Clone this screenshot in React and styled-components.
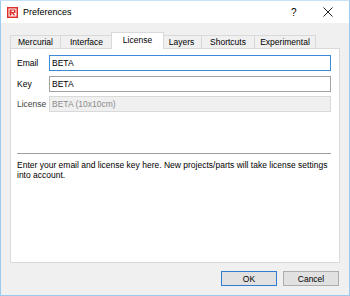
import React from "react";
import styled, { createGlobalStyle } from "styled-components";

const Global = createGlobalStyle`
  html, body { margin: 0; padding: 0; background: #fff; }
  body { font-family: "Liberation Sans", Arial, sans-serif; font-size: 8.5px; color: #000; }
`;

const Window = styled.div`
  width: 350px;
  height: 296px;
  box-sizing: border-box;
  border: 1px solid #9ccbf1;
  border-top-color: #c9e2f7;
  display: flex;
  flex-direction: column;
  background: #f0f0f0;
`;

const TitleBar = styled.div`
  height: 22px;
  background: #fff;
  display: flex;
  align-items: center;
  padding: 0 0 0 6px;
  flex-shrink: 0;
`;

const Title = styled.span`
  margin-left: 5px;
  font-size: 9px;
  flex: 1;
`;

const Help = styled.span`
  font-size: 10px;
  width: 20px;
  margin-right: 12px;
`;

const Close = styled.span`
  display: flex;
  align-items: center;
  width: 26px;
`;

const Body = styled.div`
  flex: 1;
  display: flex;
  flex-direction: column;
  padding: 10px 9px 10px 9px;
`;

const TabRow = styled.div`
  display: flex;
  align-items: flex-end;
  height: 16px;
  position: relative;
  z-index: 1;
`;

const Tab = styled.div`
  box-sizing: border-box;
  width: ${(p) => p.$w}px;
  height: ${(p) => (p.$active ? 17 : 14)}px;
  margin: 0 ${(p) => (p.$active ? -2 : 0)}px;
  border: 1px solid #d9d9d9;
  border-left-width: ${(p) => (p.$first || p.$active ? 1 : 0)}px;
  border-bottom: ${(p) => (p.$active ? "none" : "1px solid #d9d9d9")};
  background: ${(p) => (p.$active ? "#fff" : "#f0f0f0")};
  display: flex;
  align-items: center;
  justify-content: center;
  padding-bottom: ${(p) => (p.$active ? 2 : 0)}px;
  position: relative;
  z-index: ${(p) => (p.$active ? 2 : 1)};
  font-size: 8.5px;
`;

const Pane = styled.div`
  box-sizing: border-box;
  margin-top: -1px;
  height: 215px;
  width: 330px;
  background: #fff;
  border: 1px solid #d9d9d9;
  padding: 6px 8px 0 6px;
  display: flex;
  flex-direction: column;
`;

const Form = styled.div`
  display: grid;
  grid-template-columns: 32px 1fr;
  row-gap: 4.5px;
  align-items: center;
`;

const Label = styled.span`
  font-size: 8.5px;
  color: ${(p) => (p.$disabled ? "#444" : "#000")};
  white-space: nowrap;
`;

const Field = styled.div`
  box-sizing: border-box;
  height: 16px;
  border: 1px solid ${(p) => (p.$focus ? "#3c8ad8" : p.$disabled ? "#d9d9d9" : "#a3a3a3")};
  background: ${(p) => (p.$disabled ? "#f0f0f0" : "#fff")};
  color: ${(p) => (p.$disabled ? "#8b8b8b" : "#000")};
  padding-left: 2px;
  display: flex;
  align-items: center;
  font-size: 8.5px;
`;

const Separator = styled.div`
  margin: 41px 0 0 0;
  height: 1px;
  background: #a0a0a0;
  width: 314px;
`;

const Info = styled.p`
  margin: 6px 0 0 0;
  font-size: 8.5px;
  line-height: 10px;
  width: 316px;
`;

const Buttons = styled.div`
  display: flex;
  justify-content: flex-end;
  gap: 6px;
  margin-top: 8px;
  padding-right: 1px;
`;

const Button = styled.div`
  box-sizing: border-box;
  width: 56px;
  height: 15px;
  background: #e1e1e1;
  border: 1px solid ${(p) => (p.$default ? "#2f7cd1" : "#adadad")};
  display: flex;
  align-items: center;
  justify-content: center;
  font-size: 8.5px;
`;

const AppIcon = () => (
  <svg width="11" height="11" viewBox="0 0 11 11">
    <rect x="0" y="0" width="11" height="11" fill="#e0302a" />
    <rect x="1.5" y="1.5" width="8" height="8" fill="#fff" />
    <path d="M2.5 2.5 H8.5 V6 H6.5 L8.5 8.5 H6.5 L4.8 6 H4.5 V8.5 H2.5 Z" fill="#e0302a" />
    <rect x="4.5" y="3.5" width="2.5" height="1.5" fill="#fff" />
  </svg>
);

const tabs = [
  { name: "Mercurial", w: 51 },
  { name: "Interface", w: 52 },
  { name: "License", w: 53, active: true },
  { name: "Layers", w: 40 },
  { name: "Shortcuts", w: 53 },
  { name: "Experimental", w: 61 },
];

export default function App() {
  return (
    <>
      <Global />
      <Window>
        <TitleBar>
          <AppIcon />
          <Title>Preferences</Title>
          <Help>?</Help>
          <Close>
            <svg width="10" height="10" viewBox="0 0 10 10">
              <path d="M0.5 0.5 L9.5 9.5 M9.5 0.5 L0.5 9.5" stroke="#222" strokeWidth="1" />
            </svg>
          </Close>
        </TitleBar>
        <Body>
          <TabRow>
            {tabs.map((t, i) => (
              <Tab key={t.name} $w={t.w} $active={t.active} $first={i === 0}>
                {t.name}
              </Tab>
            ))}
          </TabRow>
          <Pane>
            <Form>
              <Label>Email</Label>
              <Field $focus>BETA</Field>
              <Label>Key</Label>
              <Field>BETA</Field>
              <Label $disabled>License</Label>
              <Field $disabled>BETA (10x10cm)</Field>
            </Form>
            <Separator />
            <Info>
              Enter your email and license key here. New projects/parts will take license settings
              into account.
            </Info>
          </Pane>
          <Buttons>
            <Button $default>OK</Button>
            <Button>Cancel</Button>
          </Buttons>
        </Body>
      </Window>
    </>
  );
}
